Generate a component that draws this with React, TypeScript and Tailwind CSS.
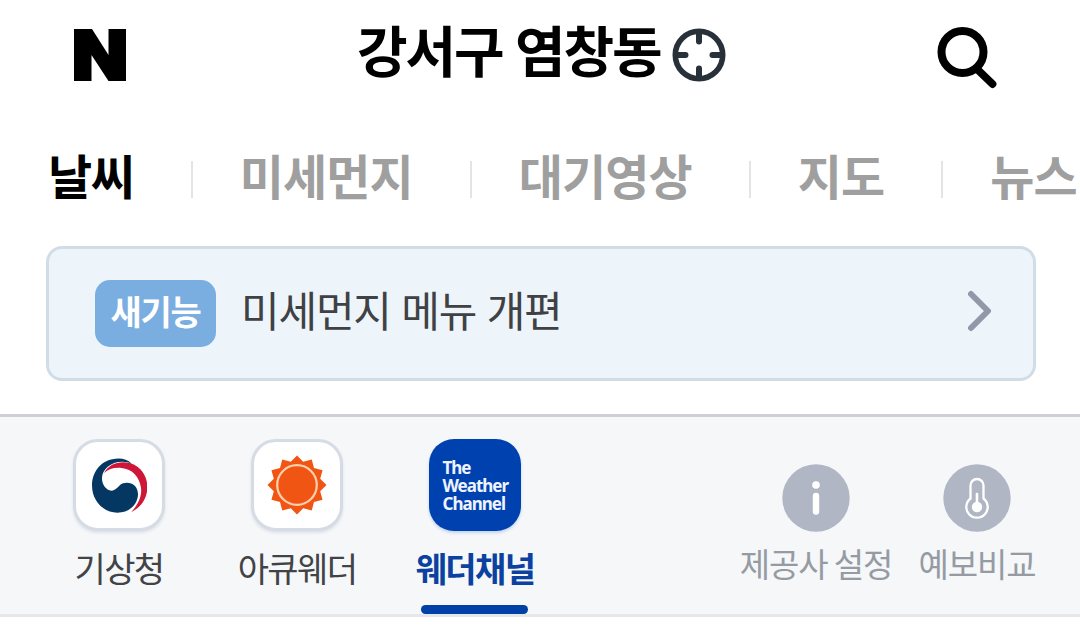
import React from 'react';
import clsx from 'clsx';

const tabs = ['날씨', '미세먼지', '대기영상', '지도', '뉴스'];

function NaverLogo() {
  return (
    <svg width="52" height="52" viewBox="0 0 52 52" className="block">
      <path d="M0 0H18L34.5 26V0H52V52H34.5L17.5 26V52H0Z" fill="#000" />
    </svg>
  );
}

function TargetIcon() {
  return (
    <svg width="54" height="54" viewBox="0 0 54 54" fill="none" stroke="#28303a" className="block">
      <circle cx="27" cy="27" r="23.7" strokeWidth="5.6" />
      <path d="M27 4V13.500M27 40.500V50M4 27H13.500M40.500 27H50" strokeWidth="6" strokeLinecap="round" />
    </svg>
  );
}

function SearchIcon() {
  return (
    <svg width="60" height="62" viewBox="0 0 60 62" fill="none" stroke="#000" className="block">
      <circle cx="25.5" cy="25" r="21" strokeWidth="8" />
      <path d="M41 43L55.5 57" strokeWidth="7.8" strokeLinecap="round" />
    </svg>
  );
}

function KmaIcon() {
  return (
    <svg width="55" height="55" viewBox="24 21 165 165" className="block">
      <path
        d="M60 66C76 36 110 28 140 37C177 50 190 82 190 108C190 142 172 168 141 184C163 160 174 135 171 110C166 78 146 54 112 51C90 49 73 55 60 66Z"
        fill="#cf1638"
      />
      <path
        d="M143 38C128 22 105 20 85 25C48 32 24 66 24 103C24 152 60 185 100 185C138 185 162 158 162 130C162 108 148 95 128 95C112 95 106 104 98 112C90 119 84 121 76 118C62 112 54 98 54 82C54 55 80 32 115 32C127 32 136 34 143 38Z"
        fill="#043863"
      />
    </svg>
  );
}

// 12 teeth, alternating outer and inner radius
const SUN_POINTS = Array.from({ length: 24 }, (_, i) => {
  const r = i % 2 === 0 ? 29.5 : 24;
  const a = (i * Math.PI) / 12 - Math.PI / 2;
  return `${(30 + r * Math.cos(a)).toFixed(2)},${(30 + r * Math.sin(a)).toFixed(2)}`;
}).join(' ');

function SunIcon() {
  return (
    <svg width="60" height="60" viewBox="0 0 60 60" className="block">
      <polygon points={SUN_POINTS} fill="#f05514" />
      <circle cx="30" cy="30" r="19.8" fill="none" stroke="#ffd0ad" strokeWidth="2.2" />
    </svg>
  );
}

function InfoIcon() {
  return (
    <svg width="68" height="68" viewBox="0 0 68 68" className="block">
      <circle cx="34" cy="34" r="33.7" fill="#b0b6c4" />
      <circle cx="34" cy="21" r="3.8" fill="#fff" />
      <path d="M34 32V47.5" stroke="#fff" strokeWidth="6.4" strokeLinecap="round" />
    </svg>
  );
}

function ThermometerIcon() {
  return (
    <svg width="68" height="68" viewBox="0 0 68 68" fill="none" className="block">
      <circle cx="34" cy="34" r="33.7" fill="#b0b6c4" />
      <path
        d="M27.5 21.5a6.5 6.5 0 0 1 13 0V34.5a10.7 10.7 0 1 1-13 0Z"
        stroke="#fff"
        strokeWidth="2.3"
      />
      <circle cx="34" cy="43" r="5.2" fill="#fff" />
      <path d="M34 30V42" stroke="#fff" strokeWidth="2.6" strokeLinecap="round" />
    </svg>
  );
}

interface ProviderProps {
  label: string;
  active?: boolean;
  className?: string;
  children: React.ReactNode;
}

function Provider({ label, active, className, children }: ProviderProps) {
  return (
    <button className={clsx('flex flex-col items-center shrink-0', className)}>
      <span
        className={clsx(
          'flex items-center justify-center size-[92px] rounded-[25px]',
          active
            ? 'bg-[#0041b0] shadow-[0_2px_3px_#c3d4f0]'
            : 'bg-white border-[3px] border-[#d6dce3] shadow-[0_2px_3px_#dde1e8]'
        )}
      >
        {children}
      </span>
      <span
        className={clsx(
          'mt-[20px] text-[34px] leading-none tracking-[-1.6px] whitespace-nowrap',
          active ? 'font-bold text-[#0b41a0]' : 'text-[#424346]'
        )}
      >
        {label}
      </span>
      {active && <span className="mt-[20px] mr-px w-[107px] h-[9px] rounded-full bg-[#0041a8]" />}
    </button>
  );
}

export default function App() {
  return (
    <div className="w-[1080px] h-[629px] overflow-hidden bg-white font-['Noto_Sans_CJK_KR',sans-serif]">
      <header className="flex items-start h-[150px]">
        <div className="ml-[74px] mt-[29px]">
          <NaverLogo />
        </div>
        <h1 className="ml-[231px] mt-[21px] w-[302px] text-[55px] leading-none font-bold tracking-[-2.1px] [word-spacing:2px] whitespace-nowrap text-black">
          강서구 염창동
        </h1>
        <div className="ml-[13px] mt-[28px]">
          <TargetIcon />
        </div>
        <button className="ml-[211px] mt-[27px]">
          <SearchIcon />
        </button>
      </header>

      <nav className="flex items-start pl-[48px] h-[96px]">
        {tabs.map((tab, i) => (
          <React.Fragment key={tab}>
            {i > 0 && <span className="shrink-0 w-[2px] h-[37px] mt-[11px] ml-[57px] mr-[47px] bg-[#e4e4e4]" />}
            <a
              className={clsx(
                'shrink-0 text-[48px] leading-none font-bold whitespace-nowrap',
                i === 0 ? 'tracking-[-1.3px] text-black' : 'tracking-[-0.9px] text-[#9f9f9f]'
              )}
            >
              {tab}
            </a>
          </React.Fragment>
        ))}
      </nav>

      <div className="flex items-start ml-[46px] w-[990px] h-[135px] rounded-[16px] border-[3px] border-[#d0dde7] bg-[#edf5fb]">
        <span className="ml-[46px] mt-[31px] w-[121px] h-[67px] rounded-[15px] bg-[#7aade0] text-center text-[34px] leading-[62px] font-bold tracking-[-1.2px] text-white">
          새기능
        </span>
        <span className="ml-[25px] mt-[39px] text-[42px] leading-none tracking-[-1.2px] [word-spacing:2.3px] whitespace-nowrap text-[#404144]">
          미세먼지 메뉴 개편
        </span>
        <svg width="26" height="42" viewBox="0 0 26 42" fill="none" className="ml-auto mr-[40px] mt-[41px]">
          <path d="M4 4L21 21L4 38" stroke="#9398a8" strokeWidth="6" strokeLinecap="round" strokeLinejoin="round" />
        </svg>
      </div>

      <section className="flex items-start mt-[33px] h-[203px] border-t-[3px] border-b-[3px] border-t-[#cdd0d7] border-b-[#e5e7ea] bg-[#f5f7f9]">
        <Provider label="기상청" className="ml-[59px] mt-[22px] w-[120px]">
          <KmaIcon />
        </Provider>
        <Provider label="아큐웨더" className="ml-[58px] mt-[22px] w-[120px]">
          <SunIcon />
        </Provider>
        <Provider label="웨더채널" active className="ml-[58px] mt-[22px] w-[120px]">
          <span className="w-[65px] mt-[2px] text-left font-['Noto_Sans',sans-serif] text-[17px] leading-[18px] font-bold tracking-[-1px] text-[#eef3ff]">
            The Weather Channel
          </span>
        </Provider>
        <button className="flex flex-col items-center ml-[201px] mt-[47px] w-[160px]">
          <InfoIcon />
          <span className="mt-[15px] text-[33px] leading-none tracking-[-1.1px] whitespace-nowrap text-[#969ba3]">
            제공사 설정
          </span>
        </button>
        <button className="flex flex-col items-center ml-px mt-[47px] w-[160px]">
          <ThermometerIcon />
          <span className="mt-[15px] text-[33px] leading-none tracking-[-1.1px] whitespace-nowrap text-[#969ba3]">
            예보비교
          </span>
        </button>
      </section>
    </div>
  );
}
